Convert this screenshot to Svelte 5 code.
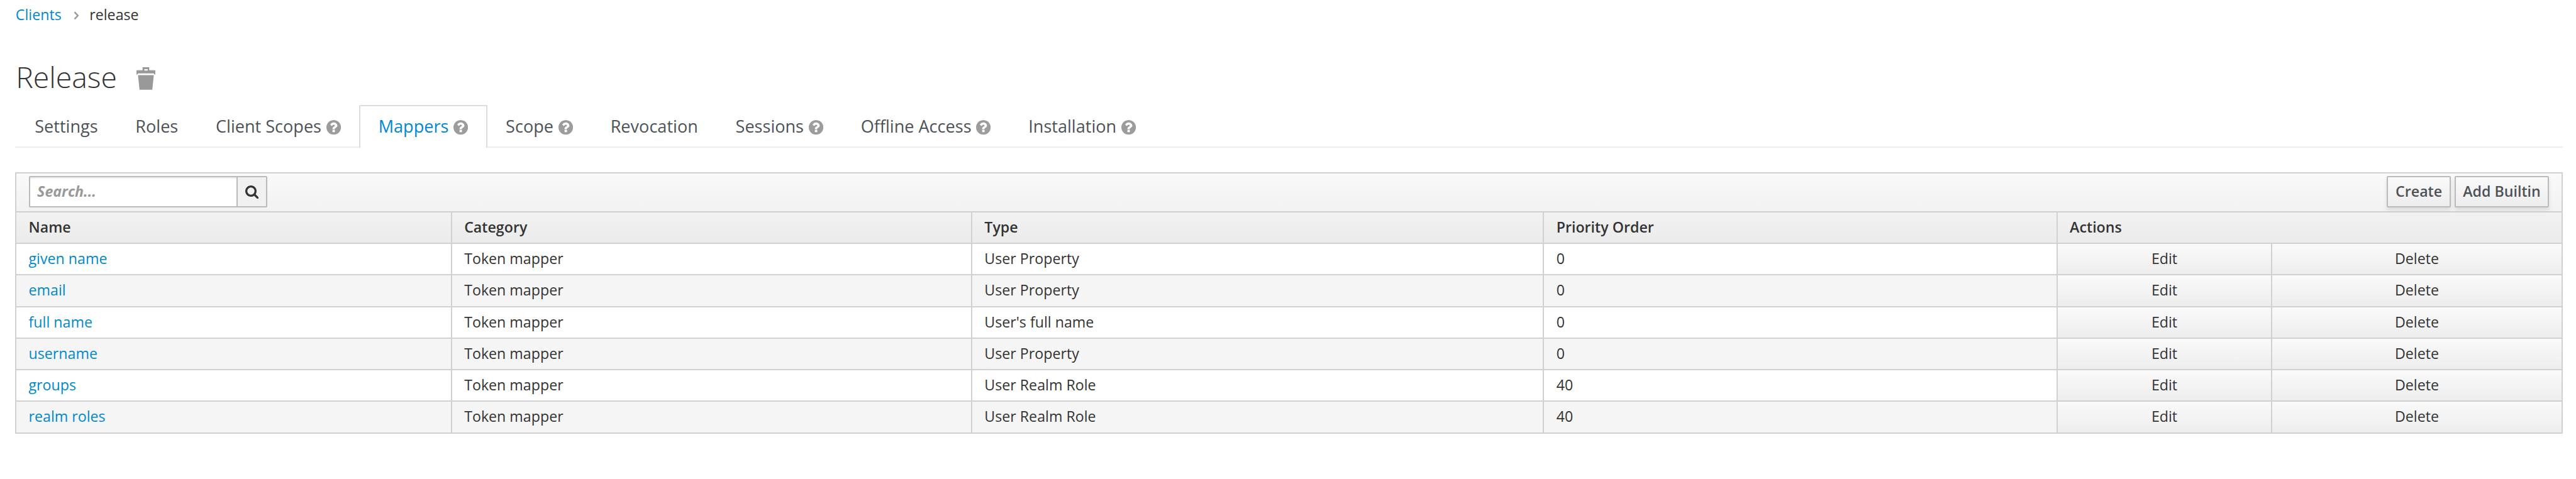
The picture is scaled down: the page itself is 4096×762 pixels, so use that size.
<script>
  const tabs = [
    { label: 'Settings' },
    { label: 'Roles' },
    { label: 'Client Scopes', help: true },
    { label: 'Mappers', help: true, active: true },
    { label: 'Scope', help: true },
    { label: 'Revocation' },
    { label: 'Sessions', help: true },
    { label: 'Offline Access', help: true },
    { label: 'Installation', help: true }
  ];

  const mappers = [
    { name: 'given name', type: 'User Property', order: 0 },
    { name: 'email', type: 'User Property', order: 0 },
    { name: 'full name', type: "User's full name", order: 0 },
    { name: 'username', type: 'User Property', order: 0 },
    { name: 'groups', type: 'User Realm Role', order: 40 },
    { name: 'realm roles', type: 'User Realm Role', order: 40 }
  ];
</script>

<main>
  <nav class="crumbs">
    <a href="#clients">Clients</a>
    <svg class="chevron" viewBox="0 0 9 14"><path d="M1.5 1.2 7 7l-5.500 5.800" /></svg>
    <span>release</span>
  </nav>

  <h1>
    <span>Release</span>
    <svg class="trash" viewBox="0 0 31 37">
      <path fill-rule="evenodd" d="M10 0h11v5h10v7h-1.500q0-2-2-2h-24q-2 0-2 2H0V5h10zM13 3v2.500h5.500V3z" />
      <path d="M2.500 13h26l-2.500 24H5z" />
    </svg>
  </h1>

  <ul class="tabs">
    {#each tabs as tab}
      <li class:active={tab.active}>
        <span>{tab.label}</span>
        {#if tab.help}
          <svg class="help" viewBox="0 0 1536 1536">
            <path d="M896 1248v-192q0-14-9-23t-23-9H672q-14 0-23 9t-9 23v192q0 14 9 23t23 9h192q14 0 23-9t9-23zm256-672q0-88-55.500-163T958 297t-170-41q-243 0-371 213-15 24 8 42l132 100q7 6 19 6 16 0 25-12 53-68 86-92 34-24 86-24 48 0 85.500 26t37.500 59q0 38-20 61t-68 45q-63 28-115.500 86.500T640 892v36q0 14 9 23t23 9h192q14 0 23-9t9-23q0-19 21.500-49.500T972 829q32-18 49-28.500t46-35 44.500-48 28-60.500 12.500-81zm384 192q0 209-103 385.500T1153.500 1433 768 1536t-385.500-103T103 1153.500 0 768t103-385.500T382.500 103 768 0t385.500 103T1433 382.500 1536 768z" />
          </svg>
        {/if}
      </li>
    {/each}
  </ul>

  <section class="table">
    <div class="head">
      <div class="toolbar">
        <div class="search">
          <span class="field">Search...</span>
          <span class="go">
            <svg viewBox="0 0 1664 1664"><path d="M1152 704q0-185-131.500-316.500T704 256 387.500 387.500 256 704t131.500 316.500T704 1152t316.500-131.500T1152 704zm512 832q0 52-38 90t-90 38q-54 0-90-38l-343-342q-179 124-399 124-143 0-273.500-55.500t-225-150-150-225T0 704t55.500-273.500 150-225 225-150T704 0t273.500 55.500 225 150 150 225T1408 704q0 220-124 399l343 343q37 37 37 90z" /></svg>
          </span>
        </div>
        <div class="buttons">
          <button>Create</button>
          <button>Add Builtin</button>
        </div>
      </div>
      <div class="row titles">
        <span>Name</span><span>Category</span><span>Type</span><span>Priority Order</span><span class="wide">Actions</span>
      </div>
    </div>
    {#each mappers as m}
      <div class="row">
        <a href="#mapper">{m.name}</a>
        <span>Token mapper</span>
        <span>{m.type}</span>
        <span>{m.order}</span>
        <span class="action">Edit</span>
        <span class="action">Delete</span>
      </div>
    {/each}
  </section>
</main>

<style>
  :global(body) { margin: 0; background: #fff; overflow: hidden; }
  main {
    --u: 0.9674px;
    box-sizing: border-box;
    width: 4096px;
    height: 762px;
    padding: 0 calc(22 * var(--u)) 0 calc(25 * var(--u));
    font-family: "Open Sans", sans-serif;
    font-size: calc(24 * var(--u));
    color: #333;
    background: #fff;
  }
  svg { display: block; flex: none; }
  a { color: #0088ce; text-decoration: none; }

  .crumbs {
    display: flex;
    align-items: center;
    height: calc(48 * var(--u));
    padding-left: calc(0.7 * var(--u));
    line-height: calc(48 * var(--u));
  }
  .chevron {
    width: calc(9 * var(--u));
    height: calc(14 * var(--u));
    margin: calc(4 * var(--u)) calc(17 * var(--u)) 0 calc(20 * var(--u));
    fill: none;
    stroke: #9c9c9c;
    stroke-width: 2.600;
  }

  h1 {
    display: flex;
    align-items: flex-start;
    gap: calc(32 * var(--u));
    height: calc(76 * var(--u));
    margin: calc(49 * var(--u)) 0 0;
    padding-left: calc(1 * var(--u));
    font-size: calc(48 * var(--u));
    font-weight: 300;
    line-height: calc(58 * var(--u));
  }
  .trash {
    width: calc(31 * var(--u));
    height: calc(37 * var(--u));
    margin-top: calc(14 * var(--u));
    fill: #999;
  }

  .tabs {
    display: flex;
    box-sizing: border-box;
    height: calc(70 * var(--u));
    margin: 0;
    padding: 0;
    list-style: none;
    border-bottom: 2px solid #ededed;
    font-size: calc(28 * var(--u));
    line-height: calc(64 * var(--u));
    color: #4d5258;
  }
  li {
    display: flex;
    align-items: center;
    gap: calc(8 * var(--u));
    box-sizing: border-box;
    height: calc(70 * var(--u));
    margin-right: -2.3px;
    padding: 0 calc(30 * var(--u));
    border: 2px solid transparent;
    border-bottom: 0;
    white-space: nowrap;
  }
  li span { padding-bottom: calc(2 * var(--u)); }
  li.active {
    color: #0088ce;
    background: #fff;
    border-color: #ddd;
    border-radius: 2px 2px 0 0;
  }
  .help {
    width: calc(24 * var(--u));
    height: calc(24 * var(--u));
    fill: #9c9c9c;
  }

  .table {
    margin-top: calc(40 * var(--u));
    border-left: 2px solid #d1d1d1;
  }
  .head { background: linear-gradient(#fafafa, #ebebeb); }
  .toolbar {
    display: flex;
    justify-content: space-between;
    align-items: flex-start;
    box-sizing: border-box;
    height: calc(64 * var(--u));
    padding: calc(4 * var(--u)) calc(20 * var(--u)) 0;
    border-top: 2px solid #d1d1d1;
    border-right: 2px solid #d1d1d1;
  }
  .search {
    display: flex;
    box-sizing: border-box;
    width: calc(392 * var(--u));
    height: calc(52 * var(--u));
    border: 2px solid #bbb;
    border-radius: 2px;
    line-height: calc(47 * var(--u));
  }
  .field {
    flex: 1;
    padding-left: calc(12 * var(--u));
    font-style: italic;
    font-weight: 700;
    color: #999;
    background: #fff;
    box-shadow: inset 0 2px 2px rgba(3, 3, 3, 0.075);
  }
  .go {
    display: flex;
    align-items: center;
    justify-content: center;
    box-sizing: border-box;
    width: calc(48 * var(--u));
    border-left: 2px solid #bbb;
    background: #f1f1f1;
  }
  .go svg {
    width: calc(22 * var(--u));
    height: calc(22 * var(--u));
    margin-top: calc(2 * var(--u));
    fill: #333;
  }
  .buttons { display: flex; gap: calc(6 * var(--u)); }
  button {
    box-sizing: border-box;
    height: calc(52 * var(--u));
    padding: 0 calc(12 * var(--u));
    font: 600 calc(24 * var(--u)) / calc(46 * var(--u)) "Open Sans", sans-serif;
    color: #4d5258;
    background: linear-gradient(#fafafa, #ededed);
    border: 2px solid #bbb;
    border-radius: 2px;
    box-shadow: 0 4px 6px rgba(3, 3, 3, 0.1);
  }

  .row {
    display: grid;
    grid-template-columns: 716fr 855fr 940fr 844fr 353fr 477fr;
    box-sizing: border-box;
    height: calc(52 * var(--u));
    border-top: 2px solid #d1d1d1;
    line-height: calc(48 * var(--u));
  }
  .row > * {
    padding-left: calc(20 * var(--u));
    border-right: 2px solid #d1d1d1;
    white-space: nowrap;
  }
  .row:nth-child(odd) { background: #f5f5f5; }
  .row:last-child {
    height: calc(54 * var(--u));
    border-bottom: 2px solid #d1d1d1;
  }
  .titles.row {
    height: calc(52 * var(--u));
    border-bottom: 0;
    font-weight: 600;
    background: none;
  }
  .wide { grid-column: span 2; }
  .row > .action {
    padding: 0;
    text-align: center;
    background: linear-gradient(#fafafa, #ededed);
  }
</style>
